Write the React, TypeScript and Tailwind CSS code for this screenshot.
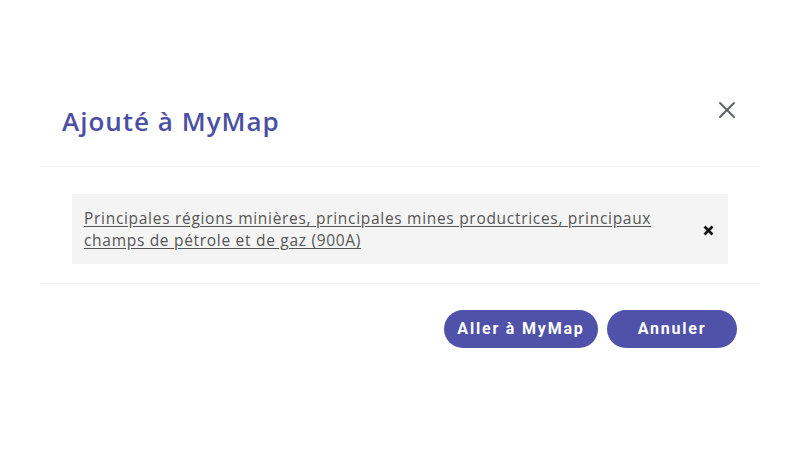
import { FC } from "react";

const CloseIcon: FC = () => (
  <svg width="18" height="18" viewBox="0 0 18 18" fill="none">
    <path
      d="M2 2L16 16M16 2L2 16"
      stroke="#5f6368"
      strokeWidth="2"
      strokeLinecap="round"
    />
  </svg>
);

const RemoveIcon: FC = () => (
  <svg width="11" height="11" viewBox="0 0 11 11" fill="none">
    <path d="M1.5 1.5L9.5 9.5M9.5 1.5L1.5 9.5" stroke="#111" strokeWidth="2.6" />
  </svg>
);

const App: FC = () => {
  return (
    <div className="w-[800px] h-[450px] bg-white pt-[90px] font-['Open_Sans',sans-serif]">
      <div className="ml-[40px] w-[720px]">
        <div className="flex justify-between items-start h-[77px] border-b border-[#f0f0f5] pl-[22px] pr-[24px]">
          <h2 className="mt-[15px] text-[26px] leading-[32px] font-semibold tracking-[1px] text-[#4b4fa3]">
            Ajouté à MyMap
          </h2>
          <button className="mt-[11px]">
            <CloseIcon />
          </button>
        </div>
        <div className="px-[32px] pt-[27px] pb-[19px] border-b border-[#f0f0f5]">
          <div className="flex items-center justify-between bg-[#f4f4f4] h-[70px] pl-[12px] pr-[14px]">
            <a
              href="#"
              className="text-[15.5px] leading-[22px] text-[#555] tracking-[0.7px] underline underline-offset-2 w-[590px]"
            >
              Principales régions minières, principales mines productrices, principaux
              champs de pétrole et de gaz (900A)
            </a>
            <button className="mt-[2px]">
              <RemoveIcon />
            </button>
          </div>
        </div>
        <div className="flex justify-end gap-[9px] pt-[26px] pr-[23px]">
          <button className="h-[38px] w-[154px] rounded-full bg-[#4f52a8] text-white text-[16px] font-bold tracking-[1.8px] font-['Roboto',sans-serif]">
            Aller à MyMap
          </button>
          <button className="h-[38px] w-[130px] rounded-full bg-[#4f52a8] text-white text-[16px] font-bold tracking-[1.8px] font-['Roboto',sans-serif]">
            Annuler
          </button>
        </div>
      </div>
    </div>
  );
};

export default App;
